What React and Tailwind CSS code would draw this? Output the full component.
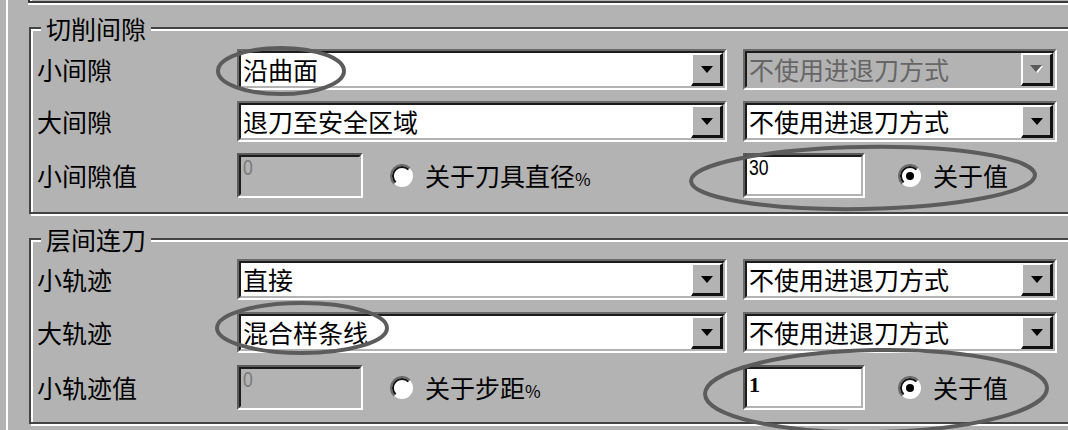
import React from "react";

const CJK = { fontFamily: '"Noto Sans CJK SC", "Noto Sans", sans-serif' };

function Arrow({ disabled }) {
  if (disabled) {
    return (
      <svg width="13" height="8" viewBox="0 0 13 8">
        <path d="M2 1H13L7.5 8Z" fill="#ffffff" />
        <path d="M0 0H12L6 7Z" fill="#5a5a5a" />
      </svg>
    );
  }
  return (
    <svg width="12" height="7" viewBox="0 0 12 7">
      <path d="M0 0H12L6 7Z" fill="#000" />
    </svg>
  );
}

function Combo({ text, disabled, wide }) {
  return (
    <div
      className={
        "h-[41px] border-t-2 border-l-2 border-b-2 border-r-2 border-t-[#6a6a6a] border-l-[#6a6a6a] border-b-white border-r-white " +
        (wide ? "w-[490px]" : "w-[314px]")
      }
    >
      <div
        className={
          "flex h-full border-t-2 border-l-2 border-b-2 border-r-2 border-t-[#1c1c1c] border-l-[#1c1c1c] border-b-[#b3b3b3] border-r-[#b3b3b3] " +
          (disabled ? "bg-[#b3b3b3]" : "bg-white")
        }
      >
        <div
          className={
            "flex flex-1 items-center pl-[2px] text-[25px] leading-none " +
            (disabled ? "text-[#666666]" : "text-black")
          }
          style={CJK}
        >
          {text}
        </div>
        <div className="flex w-[32px] items-center justify-center bg-[#b3b3b3] border-t-2 border-l-2 border-t-white border-l-white border-b-[3px] border-r-[3px] border-b-[#111] border-r-[#111]">
          <Arrow disabled={disabled} />
        </div>
      </div>
    </div>
  );
}

function TextBox({ value, disabled, serif, wide }) {
  return (
    <div
      className={
        "h-[45px] shrink-0 border-t-2 border-l-2 border-b-2 border-r-2 border-t-[#5a5a5a] border-l-[#5a5a5a] border-b-white border-r-white " +
        (wide ? "w-[126px]" : "w-[122px]")
      }
    >
      <div
        className={
          "h-full border-t-2 border-l-2 border-b-2 border-r-2 border-t-[#1c1c1c] border-l-[#1c1c1c] border-b-[#b3b3b3] border-r-[#b3b3b3] pl-[2px] " +
          (disabled ? "bg-[#b3b3b3]" : "bg-white")
        }
      >
        {serif ? (
          <div
            className="pt-[5px] text-[22px] font-bold leading-[22px] text-black"
            style={{ fontFamily: '"Liberation Serif", serif' }}
          >
            {value}
          </div>
        ) : (
          <div
            className={
              "inline-block origin-left scale-x-[0.8] text-[22px] leading-[22px] " +
              (disabled ? "text-[#7a7a7a]" : "text-black")
            }
            style={{ fontFamily: '"Liberation Sans", sans-serif' }}
          >
            {value}
          </div>
        )}
      </div>
    </div>
  );
}

function Radio({ checked }) {
  return (
    <svg width="24" height="24" viewBox="0 0 24 24" className="shrink-0">
      <circle cx="12" cy="12" r="11" fill="#ffffff" />
      <path d="M4.2 19.8 A11 11 0 0 1 19.8 4.2" stroke="#6a6a6a" strokeWidth="2" fill="none" />
      <path d="M5.6 18.4 A9 9 0 0 1 18.4 5.6" stroke="#111" strokeWidth="2" fill="none" />
      {checked && <circle cx="12" cy="12" r="4" fill="#000" />}
    </svg>
  );
}

function RadioLabel({ checked, text, pct }) {
  return (
    <div className="flex items-center">
      <Radio checked={checked} />
      <span className="ml-[11px] text-[25px] leading-none text-black" style={CJK}>
        {text}
        {pct && <span className="text-[17px]">%</span>}
      </span>
    </div>
  );
}

function Label({ children }) {
  return (
    <div className="flex items-center text-[25px] leading-none text-black" style={CJK}>
      {children}
    </div>
  );
}

function Group({ title, rows, last, top }) {
  return (
    <fieldset
      className={
        "w-[1080px] border-2 border-[#444444] pl-[6px] shadow-[inset_2px_2px_0_#ffffff,2px_2px_0_#ffffff] " +
        (top ? "pt-[8px] pb-[14px]" : "pt-[7px] pb-[12px]")
      }
    >
      <legend className="ml-[4px] bg-[#b3b3b3] px-[5px] text-[25px] leading-[26px] text-black" style={CJK}>
        {title}
      </legend>
      <div
        className={
          "grid grid-cols-[184px_490px_314px] gap-x-[16px] " +
          (top ? "gap-y-[11px]" : "gap-y-[12px]")
        }
      >
        <Label>{rows[0].label}</Label>
        <Combo wide text={rows[0].left} />
        <Combo text={rows[0].right} disabled={rows[0].rightDisabled} />

        <Label>{rows[1].label}</Label>
        <Combo wide text={rows[1].left} />
        <Combo text={rows[1].right} />

        <Label>{rows[2].label}</Label>
        <div className="flex items-center gap-[27px]">
          <TextBox wide disabled value="0" />
          <RadioLabel text={rows[2].radio} pct />
        </div>
        <div className="flex items-center gap-[33px]">
          <TextBox value={rows[2].value} serif={last} />
          <RadioLabel checked text="关于值" />
        </div>
      </div>
    </fieldset>
  );
}

function Ellipse({ className, rx, ry, rotate }) {
  const w = rx * 2 + 8;
  const h = ry * 2 + 8;
  return (
    <svg
      className={"pointer-events-none absolute " + className}
      width={w}
      height={h}
      viewBox={`0 0 ${w} ${h}`}
    >
      <ellipse
        cx={w / 2}
        cy={h / 2}
        rx={rx}
        ry={ry}
        fill="none"
        stroke="#5c5c5c"
        strokeWidth="4"
        transform={`rotate(${rotate || 0} ${w / 2} ${h / 2})`}
      />
    </svg>
  );
}

export default function App() {
  return (
    <div className="relative h-[430px] w-[1068px] overflow-hidden bg-[#b3b3b3]">
      <div className="flex h-full">
        <div className="w-[6px] shrink-0" />
        <div className="w-[2px] shrink-0 bg-white" />
        <div className="flex flex-1 flex-col pl-[20px]">
          <div className="h-[3px] border-b-2 border-l-2 border-[#3a3a3a] shadow-[inset_2px_0_0_#ffffff,0_2px_0_#ffffff]" />
          <div className="mt-[12px] flex flex-col gap-[12px] pl-[1px]">
            <Group
              top
              title="切削间隙"
              rows={[
                { label: "小间隙", left: "沿曲面", right: "不使用进退刀方式", rightDisabled: true },
                { label: "大间隙", left: "退刀至安全区域", right: "不使用进退刀方式" },
                { label: "小间隙值", radio: "关于刀具直径", value: "30" },
              ]}
            />
            <Group
              last
              title="层间连刀"
              rows={[
                { label: "小轨迹", left: "直接", right: "不使用进退刀方式" },
                { label: "大轨迹", left: "混合样条线", right: "不使用进退刀方式" },
                { label: "小轨迹值", radio: "关于步距", value: "1" },
              ]}
            />
          </div>
        </div>
      </div>

      <Ellipse className="left-[214px] top-[44px]" rx={63} ry={23} />
      <Ellipse className="left-[687px] top-[143px]" rx={172} ry={31} rotate={-1} />
      <Ellipse className="left-[213px] top-[299px]" rx={85} ry={25} />
      <Ellipse className="left-[701px] top-[346px]" rx={171} ry={41} rotate={-1} />
    </div>
  );
}
